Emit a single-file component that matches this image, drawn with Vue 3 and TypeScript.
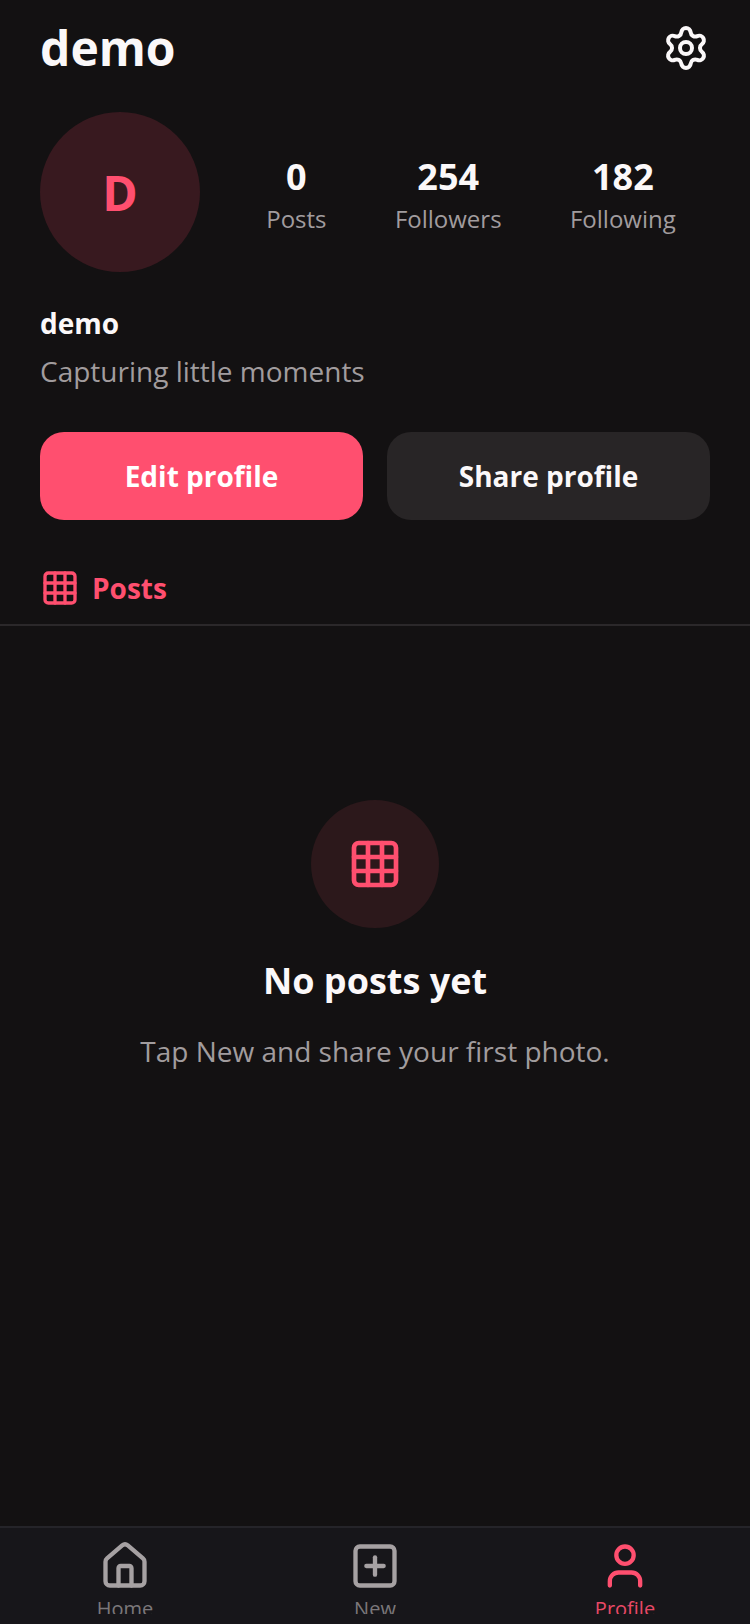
<script setup lang="ts">
interface Stat {
  value: number
  label: string
}

interface Tab {
  name: string
  icon: string[]
  active: boolean
}

const username = 'demo'
const bio = 'Capturing little moments'

const stats: Stat[] = [
  { value: 0, label: 'Posts' },
  { value: 254, label: 'Followers' },
  { value: 182, label: 'Following' },
]

const gridIcon: string[] = [
  'M5 3h14a2 2 0 0 1 2 2v14a2 2 0 0 1-2 2H5a2 2 0 0 1-2-2V5a2 2 0 0 1 2-2z',
  'M3 9h18',
  'M3 15h18',
  'M9 3v18',
  'M15 3v18',
]

const tabs: Tab[] = [
  {
    name: 'Home',
    icon: [
      'M15 21v-8a1 1 0 0 0-1-1h-4a1 1 0 0 0-1 1v8',
      'M3 10a2 2 0 0 1 .709-1.528l7-5.999a2 2 0 0 1 2.582 0l7 5.999A2 2 0 0 1 21 10v9a2 2 0 0 1-2 2H5a2 2 0 0 1-2-2z',
    ],
    active: false,
  },
  {
    name: 'New',
    icon: [
      'M5 3h14a2 2 0 0 1 2 2v14a2 2 0 0 1-2 2H5a2 2 0 0 1-2-2V5a2 2 0 0 1 2-2z',
      'M8 12h8',
      'M12 8v8',
    ],
    active: false,
  },
  {
    name: 'Profile',
    icon: [
      'M19 21v-2a4 4 0 0 0-4-4H9a4 4 0 0 0-4 4v2',
      'M12 3a4 4 0 1 0 0 8a4 4 0 1 0 0-8z',
    ],
    active: true,
  },
]
</script>

<template>
  <div class="screen">
    <header class="topbar">
      <h1 class="title">{{ username }}</h1>
      <button class="settings" type="button" aria-label="Settings">
        <svg class="icon icon-settings" viewBox="0 0 24 24" aria-hidden="true">
          <path
            d="M9.671 4.136a2.34 2.34 0 0 1 4.659 0 2.34 2.34 0 0 0 3.319 1.915 2.34 2.34 0 0 1 2.33 4.033 2.34 2.34 0 0 0 0 3.831 2.34 2.34 0 0 1-2.33 4.033 2.34 2.34 0 0 0-3.319 1.915 2.34 2.34 0 0 1-4.659 0 2.34 2.34 0 0 0-3.32-1.915 2.34 2.34 0 0 1-2.33-4.033 2.34 2.34 0 0 0 0-3.831A2.34 2.34 0 0 1 6.35 6.051a2.34 2.34 0 0 0 3.319-1.915"
          />
          <circle cx="12" cy="12" r="3" />
        </svg>
      </button>
    </header>

    <main class="content">
      <section class="profile">
        <div class="summary">
          <div class="avatar">D</div>
          <ul class="stats">
            <li v-for="stat in stats" :key="stat.label" class="stat">
              <strong class="stat-value">{{ stat.value }}</strong>
              <span class="stat-label">{{ stat.label }}</span>
            </li>
          </ul>
        </div>
        <h2 class="name">{{ username }}</h2>
        <p class="bio">{{ bio }}</p>
        <div class="actions">
          <button class="action primary" type="button">Edit profile</button>
          <button class="action" type="button">Share profile</button>
        </div>
      </section>

      <div class="section-tab">
        <svg class="icon icon-tab" viewBox="0 0 24 24" aria-hidden="true">
          <path v-for="d in gridIcon" :key="d" :d="d" />
        </svg>
        <h2 class="section-title">Posts</h2>
      </div>

      <section class="empty">
        <div class="empty-badge">
          <svg class="icon icon-empty" viewBox="0 0 24 24" aria-hidden="true">
            <path v-for="d in gridIcon" :key="d" :d="d" />
          </svg>
        </div>
        <h3 class="empty-title">No posts yet</h3>
        <p class="empty-text">Tap New and share your first photo.</p>
      </section>
    </main>

    <nav class="tabbar" aria-label="Main">
      <a
        v-for="tab in tabs"
        :key="tab.name"
        href="#"
        class="tab"
        :class="{ active: tab.active }"
        :aria-current="tab.active ? 'page' : undefined"
      >
        <svg class="icon icon-nav" viewBox="0 0 24 24" aria-hidden="true">
          <path v-for="d in tab.icon" :key="d" :d="d" />
        </svg>
        <span class="tab-label">{{ tab.name }}</span>
      </a>
    </nav>
  </div>
</template>

<style>
body {
  margin: 0;
  background: #131112;
}
</style>

<style scoped>
.screen {
  display: flex;
  flex-direction: column;
  min-height: 100vh;
  background: #131112;
  color: #fbf8f9;
  font-family: 'Open Sans', 'Noto Sans', sans-serif;
}

h1,
h2,
h3,
p,
ul {
  margin: 0;
  padding: 0;
}

button {
  border: 0;
  font-family: inherit;
  cursor: pointer;
}

.icon {
  display: block;
  flex: none;
  fill: none;
  stroke: currentColor;
  stroke-width: 2;
  stroke-linecap: round;
  stroke-linejoin: round;
}

.topbar {
  display: flex;
  align-items: center;
  justify-content: space-between;
  padding: 16px 40px;
}

.title {
  font-size: 48px;
  line-height: 64px;
  font-weight: 700;
}

.settings {
  padding: 0;
  background: none;
  color: inherit;
}

.icon-settings {
  width: 48px;
  height: 48px;
}

.content {
  flex: 1;
}

.profile {
  padding: 16px 40px 0;
}

.summary {
  display: flex;
  align-items: center;
  gap: 32px;
}

.avatar {
  display: flex;
  flex: none;
  align-items: center;
  justify-content: center;
  width: 160px;
  height: 160px;
  border-radius: 50%;
  background: #38191f;
  color: #ff4f6f;
  font-size: 48px;
  font-weight: 700;
}

.stats {
  display: flex;
  flex: 1;
  justify-content: space-around;
  list-style: none;
}

.stat {
  display: flex;
  flex-direction: column;
  align-items: center;
}

.stat-value {
  font-size: 36px;
  line-height: 54px;
  font-weight: 700;
}

.stat-label {
  color: #a19c9e;
  font-size: 24px;
  line-height: 30px;
}

.name {
  margin-top: 32px;
  font-size: 28px;
  line-height: 38px;
  font-weight: 700;
}

.bio {
  margin-top: 8px;
  color: #a19c9e;
  font-size: 28px;
  line-height: 42px;
}

.actions {
  display: flex;
  gap: 24px;
  margin-top: 40px;
}

.action {
  flex: 1;
  height: 88px;
  padding: 0 16px;
  border-radius: 24px;
  background: #282526;
  color: #fbf8f9;
  font-size: 28px;
  line-height: 38px;
  font-weight: 700;
}

.action.primary {
  background: #ff4f6f;
  color: #ffffff;
}

.section-tab {
  display: flex;
  align-items: center;
  gap: 12px;
  margin-top: 48px;
  padding: 0 40px 16px;
  border-bottom: 2px solid #2b282a;
  color: #ff4f6f;
}

.icon-tab {
  width: 40px;
  height: 40px;
}

.section-title {
  font-size: 28px;
  line-height: 38px;
  font-weight: 700;
}

.empty {
  display: flex;
  flex-direction: column;
  align-items: center;
  padding: 174px 40px 80px;
  text-align: center;
}

.empty-badge {
  display: flex;
  align-items: center;
  justify-content: center;
  width: 128px;
  height: 128px;
  border-radius: 50%;
  background: #2c181b;
  color: #ff4f6f;
}

.icon-empty {
  width: 56px;
  height: 56px;
}

.empty-title {
  margin-top: 28px;
  font-size: 36px;
  line-height: 50px;
  font-weight: 700;
}

.empty-text {
  margin-top: 24px;
  color: #a19c9e;
  font-size: 28px;
  line-height: 42px;
}

.tabbar {
  display: flex;
  padding: 12px 0 10px;
  border-top: 2px solid #252429;
  background: #17161a;
}

.tab {
  display: flex;
  flex: 1;
  flex-direction: column;
  align-items: center;
  color: #a6a1a3;
  text-decoration: none;
}

.tab.active {
  color: #ff4f6f;
}

.icon-nav {
  width: 52px;
  height: 52px;
}

.tab-label {
  height: 22px;
  overflow: hidden;
  font-size: 20px;
  line-height: 34px;
  opacity: 0.7;
}

.tab.active .tab-label {
  opacity: 0.9;
}
</style>
